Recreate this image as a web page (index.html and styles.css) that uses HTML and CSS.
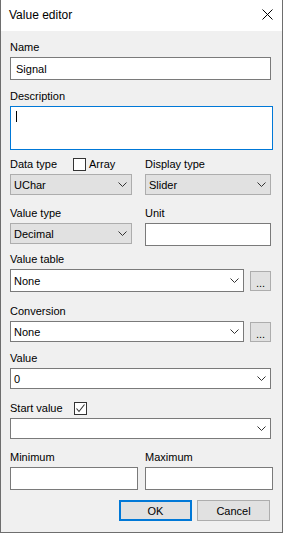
FILE: index.html
```html
<!DOCTYPE html>
<html lang="en">
<head>
    <meta charset="UTF-8">
    <title>Value editor</title>
    <link rel="stylesheet" href="styles.css">
</head>
<body>
    <div class="window">
        <div class="titlebar">
            <span class="title">Value editor</span>
            <svg class="close" width="11" height="11" viewBox="0 0 11 11">
                <path d="M0.5 0.5 L10.5 10.5 M10.5 0.5 L0.5 10.5" stroke="#000" stroke-width="1" fill="none"/>
            </svg>
        </div>

        <div class="content">
            <!-- Name -->
            <div class="field first">
                <div class="label">Name</div>
                <div class="textbox full">Signal</div>
            </div>

            <!-- Description -->
            <div class="field desc-field">
                <div class="label">Description</div>
                <div class="textarea"><span class="caret"></span></div>
            </div>

            <!-- Data type / Display type -->
            <div class="pair data-row">
                <div>
                    <div class="label check-row">
                        <span class="check-text">Data type</span>
                        <span class="checkbox"></span>
                        <span class="check-name">Array</span>
                    </div>
                    <div class="dropdown left">UChar<svg class="chevron" width="9" height="5" viewBox="0 0 9 5"><path d="M0.5 0.5 L4.5 4.5 L8.5 0.5" stroke="#333" fill="none"/></svg></div>
                </div>
                <div>
                    <div class="label check-row">Display type</div>
                    <div class="dropdown right">Slider<svg class="chevron" width="9" height="5" viewBox="0 0 9 5"><path d="M0.5 0.5 L4.5 4.5 L8.5 0.5" stroke="#333" fill="none"/></svg></div>
                </div>
            </div>

            <!-- Value type / Unit -->
            <div class="pair type-row">
                <div>
                    <div class="label">Value type</div>
                    <div class="dropdown left">Decimal<svg class="chevron" width="9" height="5" viewBox="0 0 9 5"><path d="M0.5 0.5 L4.5 4.5 L8.5 0.5" stroke="#333" fill="none"/></svg></div>
                </div>
                <div>
                    <div class="label">Unit</div>
                    <div class="textbox right"></div>
                </div>
            </div>

            <!-- Value table -->
            <div class="field table-field">
                <div class="label">Value table</div>
                <div class="combo-row">
                    <div class="combo short tall">None<svg class="chevron" width="9" height="5" viewBox="0 0 9 5"><path d="M0.5 0.5 L4.5 4.5 L8.5 0.5" stroke="#333" fill="none"/></svg></div>
                    <div class="dots">...</div>
                </div>
            </div>

            <!-- Conversion -->
            <div class="field conv-field">
                <div class="label">Conversion</div>
                <div class="combo-row">
                    <div class="combo short">None<svg class="chevron" width="9" height="5" viewBox="0 0 9 5"><path d="M0.5 0.5 L4.5 4.5 L8.5 0.5" stroke="#333" fill="none"/></svg></div>
                    <div class="dots">...</div>
                </div>
            </div>

            <!-- Value -->
            <div class="field value-field">
                <div class="label">Value</div>
                <div class="combo full">0<svg class="chevron" width="9" height="5" viewBox="0 0 9 5"><path d="M0.5 0.5 L4.5 4.5 L8.5 0.5" stroke="#333" fill="none"/></svg></div>
            </div>

            <!-- Start value -->
            <div class="field start-field">
                <div class="label check-row">
                    <span class="check-text start">Start value</span>
                    <span class="checkbox">
                        <svg width="11" height="11" viewBox="0 0 11 11"><path d="M1.5 5.5 L4 8.5 L9.5 1.5" stroke="#333" stroke-width="1.1" fill="none"/></svg>
                    </span>
                </div>
                <div class="combo full"><svg class="chevron" width="9" height="5" viewBox="0 0 9 5"><path d="M0.5 0.5 L4.5 4.5 L8.5 0.5" stroke="#333" fill="none"/></svg></div>
            </div>

            <!-- Minimum / Maximum -->
            <div class="pair range-row">
                <div>
                    <div class="label">Minimum</div>
                    <div class="textbox half"></div>
                </div>
                <div>
                    <div class="label">Maximum</div>
                    <div class="textbox half"></div>
                </div>
            </div>

            <div class="buttons">
                <div class="btn ok">OK</div>
                <div class="btn">Cancel</div>
            </div>
        </div>
    </div>
</body>
</html>
```

FILE: styles.css
```css
html {
    background-color: #ffffff;
}
body {
    margin: 0;
    font-family: "Liberation Sans", Arial, sans-serif;
    font-size: 11px;
    color: #000000;
}
.window {
    width: 283px;
    height: 533px;
    box-sizing: border-box;
    border: 1px solid #6e6e6e;
    border-top: none;
    background-color: #f0f0f0;
}
.titlebar {
    height: 31px;
    background-color: #ffffff;
    display: flex;
    align-items: center;
    justify-content: space-between;
    padding: 0 9px 0 8px;
}
.title {
    font-size: 12px;
    padding-bottom: 1px;
}
.close {
    display: block;
    margin-bottom: 2px;
}
.content {
    padding: 10px 11px 0 9px;
}
.label {
    line-height: 13px;
    height: 13px;
    margin-bottom: 3px;
    white-space: nowrap;
}
.field.desc-field { margin-top: 10px; }
.data-row { margin-top: 8px; }
.type-row { margin-top: 12px; }
.table-field { margin-top: 7px; }
.conv-field { margin-top: 13px; }
.value-field { margin-top: 10px; }
.start-field { margin-top: 13px; }
.range-row { margin-top: 12px; }

.pair {
    display: grid;
    grid-template-columns: 135px 128px;
}
.check-row {
    display: flex;
    align-items: center;
}
.check-text {
    width: 63px;
}
.check-text.start {
    width: 64px;
}
.checkbox {
    width: 13px;
    height: 13px;
    box-sizing: border-box;
    border: 1px solid #333333;
    background-color: #ffffff;
    display: flex;
    align-items: center;
    justify-content: center;
}
.check-name {
    margin-left: 3px;
}

.textbox, .textarea, .combo, .dropdown {
    box-sizing: border-box;
    border: 1px solid #7a7a7a;
    background-color: #ffffff;
    display: flex;
    align-items: center;
    padding-left: 5px;
}
.textbox {
    height: 23px;
}
.textbox.full { width: 261px; }
.textbox.right { width: 126px; }
.textbox.half { width: 128px; }
.textarea {
    width: 263px;
    height: 44px;
    border-color: #0078d7;
    align-items: flex-start;
    padding-top: 4px;
}
.caret {
    width: 1px;
    height: 11px;
    background-color: #000000;
}

.chevron {
    margin-left: auto;
}
.dropdown {
    height: 21px;
    background-color: #e1e1e1;
    border-color: #adadad;
    padding: 0 4px 0 3px;
}
.dropdown.left { width: 122px; }
.dropdown.right { width: 126px; }

.combo {
    height: 21px;
    padding: 0 4px 0 3px;
}
.combo.tall { height: 23px; }
.combo.short { width: 234px; }
.combo.full { width: 261px; }
.combo-row {
    display: flex;
    align-items: center;
    gap: 6px;
}
.dots {
    width: 21px;
    height: 20px;
    box-sizing: border-box;
    border: 1px solid #adadad;
    background-color: #e1e1e1;
    text-align: center;
    line-height: 22px;
}

.buttons {
    margin-top: 10px;
    display: flex;
    justify-content: flex-end;
    gap: 5px;
    padding-right: 1px;
}
.btn {
    width: 73px;
    height: 21px;
    box-sizing: border-box;
    border: 1px solid #adadad;
    background-color: #e1e1e1;
    display: flex;
    align-items: center;
    justify-content: center;
}
.btn.ok {
    border: 2px solid #0078d7;
}
```
